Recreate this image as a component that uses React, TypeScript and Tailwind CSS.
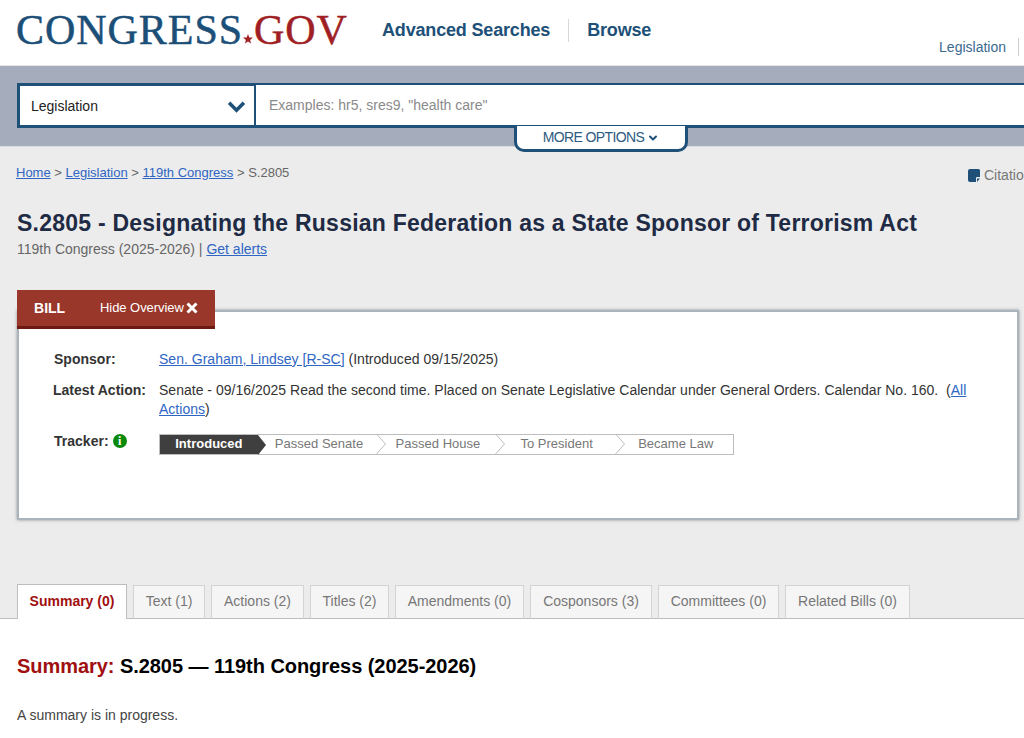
import { ChevronDown } from 'lucide-react';

const tabs = ['Text (1)', 'Actions (2)', 'Titles (2)', 'Amendments (0)', 'Cosponsors (3)', 'Committees (0)', 'Related Bills (0)'];
const tabWidths = ['w-[72px]', 'w-[93px]', 'w-[79px]', 'w-[129px]', 'w-[122px]', 'w-[121px]', 'w-[125px]'];

const steps = [
  { label: 'Passed Senate', box: 'w-[128px] pl-[17px]' },
  { label: 'Passed House', box: 'w-[120px] pl-[10px]' },
  { label: 'To President', box: 'w-[120px] pl-[15px]' },
  { label: 'Became Law', box: 'w-[108px] pl-[13px]' },
];

function Chevron({ className }: { className?: string }) {
  return (
    <svg viewBox="0 0 18 12" className={className} fill="none" stroke="currentColor" strokeWidth="3.4">
      <path d="M2 2.5l7 7 7-7" />
    </svg>
  );
}

function Step({ label, box, last }: { label: string; box: string; last: boolean }) {
  return (
    <div className={`relative flex h-full items-center ${box}`}>
      <span>{label}</span>
      {!last && (
        <svg viewBox="0 0 10 20" className="absolute right-0 top-[-0.5px] h-[20px] w-[10px]" fill="none" stroke="#bdbdbd">
          <path d="M0.5 0l9 10-9 10" />
        </svg>
      )}
    </div>
  );
}

export default function App() {
  return (
    <div className="flex h-[738px] w-[1024px] flex-col overflow-hidden bg-white font-['Liberation_Sans',Arial,sans-serif] text-[14px] text-[#333]">
      {/* Header */}
      <header className="flex h-[66px] shrink-0 border-b border-[#e6e6e6] bg-white">
        <div className="ml-[16px] mt-[6px] flex h-[48px] w-[332px] items-baseline whitespace-nowrap font-['Liberation_Serif',serif] text-[42px] leading-[48px] tracking-[0.95px] [-webkit-text-stroke:0.5px]">
          <span className="text-[#1c4f78]">CONGRESS</span>
          <svg viewBox="0 0 20 20" className="h-[10px] w-[10px] shrink-0 text-[#a32022]">
            <path d="M10 0l2.6 6.9 7.4.3-5.800 4.600 2 7.200-6.200-4.100-6.200 4.100 2-7.200L0 7.200l7.400-.3z" fill="currentColor" />
          </svg>
          <span className="ml-[1px] text-[#a01f24]">GOV</span>
        </div>
        <nav className="ml-[34px] mt-[18px] flex h-[24px] items-center text-[18px] font-bold tracking-[-0.17px] text-[#205077]">
          <span>Advanced Searches</span>
          <span className="mx-[18px] h-[23px] w-px bg-[#d8d8d8]" />
          <span>Browse</span>
        </nav>
        <div className="ml-auto mt-[38px] flex h-[18px] items-center text-[14px] text-[#3b6a8f]">
          <span>Legislation</span>
          <span className="ml-[12px] mr-[5px] h-[18px] w-px bg-[#cfcfcf]" />
        </div>
      </header>

      {/* Search band */}
      <div className="relative z-10 flex h-[81px] shrink-0 border-b border-[#d8dbe1] bg-[#a5adbc] pl-[17px] pt-[17px]">
        <div className="flex h-[45px] w-[239px] items-center justify-between border-[3px] border-r-2 border-[#1f5078] bg-white pl-[11px] pr-[8px] pt-[1px] text-[14px] text-[#222]">
          <span>Legislation</span>
          <Chevron className="h-[13px] w-[19px] text-[#1f5078]" />
        </div>
        <div className="flex h-[45px] flex-1 items-center border-y-[3px] border-[#1f5078] border-t-2 bg-white pl-[13px] pt-[1px] text-[14px] text-[#8a8a8a]">
          Examples: hr5, sres9, "health care"
        </div>
        <div className="absolute left-[514px] top-[60px] flex h-[26px] w-[174px] items-center justify-center gap-[3px] rounded-b-[10px] border-x-[3px] border-b-[3px] border-[#1f5078] bg-white text-[14px] tracking-[-0.6px] text-[#2c5a80]">
          MORE OPTIONS
          <ChevronDown className="h-[12px] w-[12px] text-[#1f5078]" strokeWidth={4} />
        </div>
      </div>

      {/* Main grey area */}
      <main className="relative flex h-[472px] shrink-0 flex-col border-b border-[#bdbdbd] bg-[#ececec] px-[17px]">
        <div className="-ml-px mt-[18px] flex h-[16px] items-center whitespace-nowrap text-[13px] text-[#666]">
          <a className="text-[#2f66c4] underline">Home</a>
          <span>&nbsp;&gt;&nbsp;</span>
          <a className="text-[#2f66c4] underline">Legislation</a>
          <span>&nbsp;&gt;&nbsp;</span>
          <a className="text-[#2f66c4] underline">119th Congress</a>
          <span>&nbsp;&gt; S.2805</span>
        </div>
        <div className="absolute left-[968px] top-[18px] flex items-center gap-[4px] whitespace-nowrap text-[14px] text-[#777]">
          <svg viewBox="0 0 12 13" className="h-[13px] w-[12px]">
            <path d="M2 0h8.500A1.500 1.500 0 0 1 12 1.500V8H9a1 1 0 0 0-1 1v4H2a2 2 0 0 1-2-2V2a2 2 0 0 1 2-2z" fill="#1f5078" />
            <path d="M9 9.500h3L9 13z" fill="#1f5078" />
          </svg>
          Citation
        </div>

        <h1 className="mt-[27px] whitespace-nowrap text-[23px] font-bold leading-[30px] tracking-[0.23px] text-[#1f2a44]">
          S.2805 - Designating the Russian Federation as a State Sponsor of Terrorism Act
        </h1>
        <div className="mt-[1px] h-[20px] text-[14px] leading-[20px] text-[#666]">
          119th Congress (2025-2026) | <a className="text-[#2f66c4] underline">Get alerts</a>
        </div>

        {/* Overview card */}
        <section className="relative mt-[51px] h-[210px] w-[1002px] border-2 border-[#a9b4bd] bg-white text-[14px] tracking-[0.015px] shadow-[0_0_3px_rgba(60,60,60,0.5)]">
          <div className="absolute left-[-2px] top-[-22px] flex h-[39px] w-[198px] items-center border-b-[3px] border-[#6d1a12] bg-[#9a372b] pl-[17px] text-white">
            <span className="w-[66px] text-[14px] font-bold">BILL</span>
            <span className="whitespace-nowrap text-[13px] tracking-[-0.05px]">Hide Overview</span>
            <svg viewBox="0 0 12 12" className="ml-[2px] h-[12px] w-[12px]" fill="none" stroke="white" strokeWidth="3">
              <path d="M1.500 1.500l9 9M10.500 1.500l-9 9" />
            </svg>
          </div>

          <div className="absolute left-[34px] right-[30px] top-[37px] flex flex-col">
            <div className="flex h-[20px] items-center">
              <span className="w-[106px] pl-px font-bold">Sponsor:</span>
              <span>
                <a className="text-[#2f66c4] underline">Sen. Graham, Lindsey [R-SC]</a> (Introduced 09/15/2025)
              </span>
            </div>
            <div className="mt-[12px] flex leading-[19px]">
              <span className="w-[106px] shrink-0 font-bold">Latest Action:</span>
              <span className="w-[820px]">
                Senate - 09/16/2025 Read the second time. Placed on Senate Legislative Calendar under General Orders. Calendar No. 160.&nbsp; (<a className="text-[#2f66c4] underline">All Actions</a>)
              </span>
            </div>
            <div className="mt-[15px] flex h-[20px] items-center">
              <span className="-mt-[6px] flex w-[106px] items-center gap-[4px] pl-px font-bold">
                Tracker:
                <span className="flex h-[14px] w-[14px] items-center justify-center rounded-full bg-[#0c8a0c] font-['Liberation_Serif',serif] text-[12px] leading-none text-white">i</span>
              </span>
              <div className="flex h-[21px] w-[575px] items-center border border-[#bdbdbd] text-[13px] text-[#777]">
                <div className="relative flex h-full w-[98px] items-center justify-center bg-[#3f3f3f] font-bold text-white">
                  Introduced
                  <span className="absolute left-full top-0 h-0 w-0 border-y-[10px] border-l-[8px] border-y-transparent border-l-[#3f3f3f]" />
                </div>
                {steps.map((s, i) => (
                  <Step key={s.label} label={s.label} box={s.box} last={i === steps.length - 1} />
                ))}
              </div>
            </div>
          </div>
        </section>

        {/* Tabs */}
        <div className="absolute bottom-[-1px] left-[17px] flex items-end gap-[6px]">
          <div className="flex h-[35px] w-[110px] items-center justify-center border border-b-0 border-[#bdbdbd] bg-white pb-[1px] text-[14px] font-bold text-[#a00f0f]">
            Summary (0)
          </div>
          {tabs.map((t, i) => (
            <div key={t} className={`flex h-[34px] items-center justify-center border border-[#d3d3d3] border-b-[#bdbdbd] bg-[#f5f5f5] pb-[1px] text-[14px] text-[#777] ${tabWidths[i]}`}>
              {t}
            </div>
          ))}
        </div>
      </main>

      {/* Summary */}
      <div className="flex-1 bg-white px-[17px]">
        <h2 className="mt-[34px] whitespace-nowrap text-[20px] font-bold leading-[26px] tracking-[-0.05px] text-black">
          <span className="text-[#a00f0f]">Summary:</span> S.2805 — 119th Congress (2025-2026)
        </h2>
        <p className="mt-[26px] text-[14px] leading-[20px] text-[#444]">A summary is in progress.</p>
      </div>
    </div>
  );
}
